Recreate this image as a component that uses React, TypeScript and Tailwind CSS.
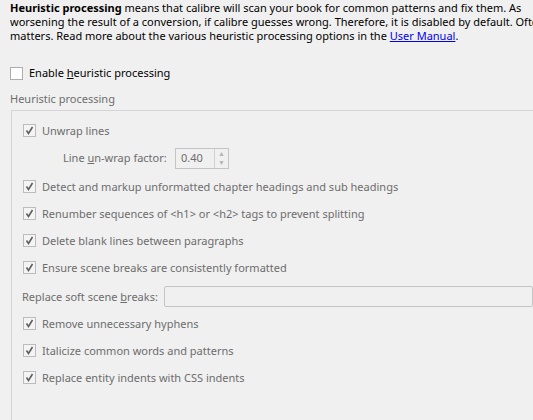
const FONT = "font-['Noto_Sans','Open_Sans',sans-serif]";

function CheckMark() {
  return (
    <svg width="9" height="9" viewBox="0 0 9 9" className="block">
      <path
        d="M1.5 4.5 L3.5 7.5 L7.5 1"
        fill="none"
        stroke="#5f5f5f"
        strokeWidth="1.6"
      />
    </svg>
  );
}

function DisabledCheck({ label }: { label: string }) {
  return (
    <div className="flex h-[27px] items-center gap-[6px] pl-[11px]">
      <span className="flex h-[13px] w-[13px] items-center justify-center border border-[#bcbcbc] bg-[#f4f4f4]">
        <CheckMark />
      </span>
      <span className="text-[#6d6d6d]">{label}</span>
    </div>
  );
}

const FIRST_CHECKS = [
  "Detect and markup unformatted chapter headings and sub headings",
  "Renumber sequences of <h1> or <h2> tags to prevent splitting",
  "Delete blank lines between paragraphs",
  "Ensure scene breaks are consistently formatted",
];

const LAST_CHECKS = [
  "Remove unnecessary hyphens",
  "Italicize common words and patterns",
  "Replace entity indents with CSS indents",
];

export default function App() {
  return (
    <div
      className={`${FONT} h-[420px] w-[533px] overflow-hidden bg-[#f0f0f0] text-[11px] leading-[14px] text-black`}
    >
      <div className="overflow-hidden whitespace-nowrap pl-[10px] pt-[1px]">
        <p>
          <b>Heuristic processing</b> means that calibre will scan your book for
          common patterns and fix them. As
        </p>
        <p>
          worsening the result of a conversion, if calibre guesses wrong.
          Therefore, it is disabled by default. Often
        </p>
        <p>
          matters. Read more about the various heuristic processing options in
          the{" "}
          <span className="text-[#0000ee] underline">User Manual</span>.
        </p>
      </div>

      <div className="mt-[23px] flex items-center gap-[6px] pl-[10px]">
        <span className="h-[13px] w-[13px] border border-[#adadad] bg-white" />
        <span>
          Enable <span className="underline">h</span>euristic processing
        </span>
      </div>

      <div className="mt-[12px] pl-[10px] text-[#6d6d6d]">Heuristic processing</div>

      <div className="ml-[11px] mt-[4px] h-[330px] border-l border-t border-[#d5d5d5] pt-[5px]">
        <div className="pt-[1px]">
          <DisabledCheck label="Unwrap lines" />
        </div>
        <div className="flex h-[28px] items-center pl-[51px] text-[#6d6d6d]">
          <span className="w-[112px]">
            Line <span className="underline">u</span>n-wrap factor:
          </span>
          <div className="flex h-[21px] w-[54px] items-stretch border border-[#c4c4c4] bg-[#f0f0f0]">
            <span className="flex flex-1 items-center pl-[5px]">0.40</span>
            <div className="flex w-[14px] flex-col border-l border-[#d0d0d0]">
              <span className="flex flex-1 items-center justify-center text-[7px] leading-none text-[#b5b5b5]">
                ▲
              </span>
              <span className="flex flex-1 items-center justify-center text-[7px] leading-none text-[#b5b5b5]">
                ▼
              </span>
            </div>
          </div>
        </div>
        <div className="pt-[1px]">
          {FIRST_CHECKS.map((label) => (
            <DisabledCheck key={label} label={label} />
          ))}
        </div>
        <div className="mt-[2px] flex h-[27px] items-center pl-[10px] text-[#6d6d6d]">
          <span className="w-[142px] whitespace-nowrap">
            Replace soft scene <span className="underline">b</span>reaks:
          </span>
          <div className="h-[21px] flex-1 rounded-[2px] border border-[#c4c4c4] bg-[#f0f0f0]" />
        </div>
        {LAST_CHECKS.map((label) => (
          <DisabledCheck key={label} label={label} />
        ))}
      </div>
    </div>
  );
}
